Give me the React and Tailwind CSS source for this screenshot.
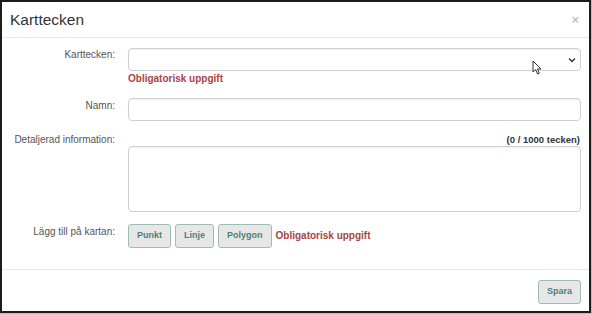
import React from 'react';

const Required = ({ className = '' }) => (
  <span className={`text-[10px] font-bold leading-[14px] text-[#a94442] ${className}`}>
    Obligatorisk uppgift
  </span>
);

const Label = ({ children, className = '' }) => (
  <div className={`w-[113px] shrink-0 text-right text-[10px] leading-[14px] text-[#555] ${className}`}>
    {children}
  </div>
);

const MapButton = ({ children }) => (
  <button className="h-[24px] px-[8px] rounded-[3px] border border-[#9dbdb2] bg-[#e7e7e7] text-[9px] font-bold text-[#4f7f76]">
    {children}
  </button>
);

const App = () => {
  return (
    <div className="w-[592px] h-[314px] bg-[#bdbdbd]" style={{ fontFamily: '"Liberation Sans", Arial, sans-serif' }}>
      <div className="w-[591px] h-[313px] border-2 border-[#1c1c1c] bg-white flex flex-col">
        {/* header */}
        <div className="h-[36px] shrink-0 border-b border-[#e8e8e8] flex items-center justify-between pl-[8px] pr-[10px]">
          <h1 className="text-[15.5px] leading-none text-[#333]">Karttecken</h1>
          <span className="text-[13px] font-bold leading-none text-[#c4c4c4]">×</span>
        </div>

        {/* body */}
        <div className="flex-1 pt-[10px] pr-[8px]">
          <div className="flex gap-[13px]">
            <Label>Karttecken:</Label>
            <div className="flex-1 flex flex-col">
              <div className="relative h-[23px] rounded-[4px] border border-[#cfcfcf] shadow-[inset_0_1px_1px_rgba(0,0,0,0.06)]">
                <svg className="absolute right-[4px] top-[8px]" width="8" height="6" viewBox="0 0 8 6">
                  <path d="M1 1.5 L4 4.5 L7 1.5" fill="none" stroke="#333" strokeWidth="1.4" />
                </svg>
                <svg className="absolute left-[403px] top-[11px]" width="11" height="15" viewBox="0 0 11 15">
                  <path d="M1 1 L1 12 L3.6 9.6 L5.6 14 L7.3 13.2 L5.4 9 L9 9 Z" fill="#fff" stroke="#333" strokeWidth="1" strokeLinejoin="round" />
                </svg>
              </div>
              <Required className="mt-[1px]" />
            </div>
          </div>

          <div className="flex gap-[13px] mt-[12px]">
            <Label className="pt-[1px]">Namn:</Label>
            <div className="flex-1 h-[23px] rounded-[4px] border border-[#cfcfcf] shadow-[inset_0_1px_1px_rgba(0,0,0,0.06)]" />
          </div>

          <div className="flex gap-[13px] mt-[12px]">
            <Label>Detaljerad information:</Label>
            <div className="flex-1 flex flex-col">
              <div className="text-right text-[9.5px] font-bold leading-[13px] text-[#333] pr-[1px]">(0 / 1000 tecken)</div>
              <div className="h-[66px] rounded-[4px] border border-[#cfcfcf] shadow-[inset_0_1px_1px_rgba(0,0,0,0.06)]" />
            </div>
          </div>

          <div className="flex gap-[13px] mt-[12px]">
            <Label className="pt-[1px]">Lägg till på kartan:</Label>
            <div className="flex items-center gap-[4px]">
              <MapButton>Punkt</MapButton>
              <MapButton>Linje</MapButton>
              <MapButton>Polygon</MapButton>
              <Required />
            </div>
          </div>
        </div>

        {/* footer */}
        <div className="h-[42px] shrink-0 border-t border-[#e8e8e8] flex justify-end pt-[10px] pr-[8px]">
          <MapButton>Spara</MapButton>
        </div>
      </div>
    </div>
  );
};

export default App;
